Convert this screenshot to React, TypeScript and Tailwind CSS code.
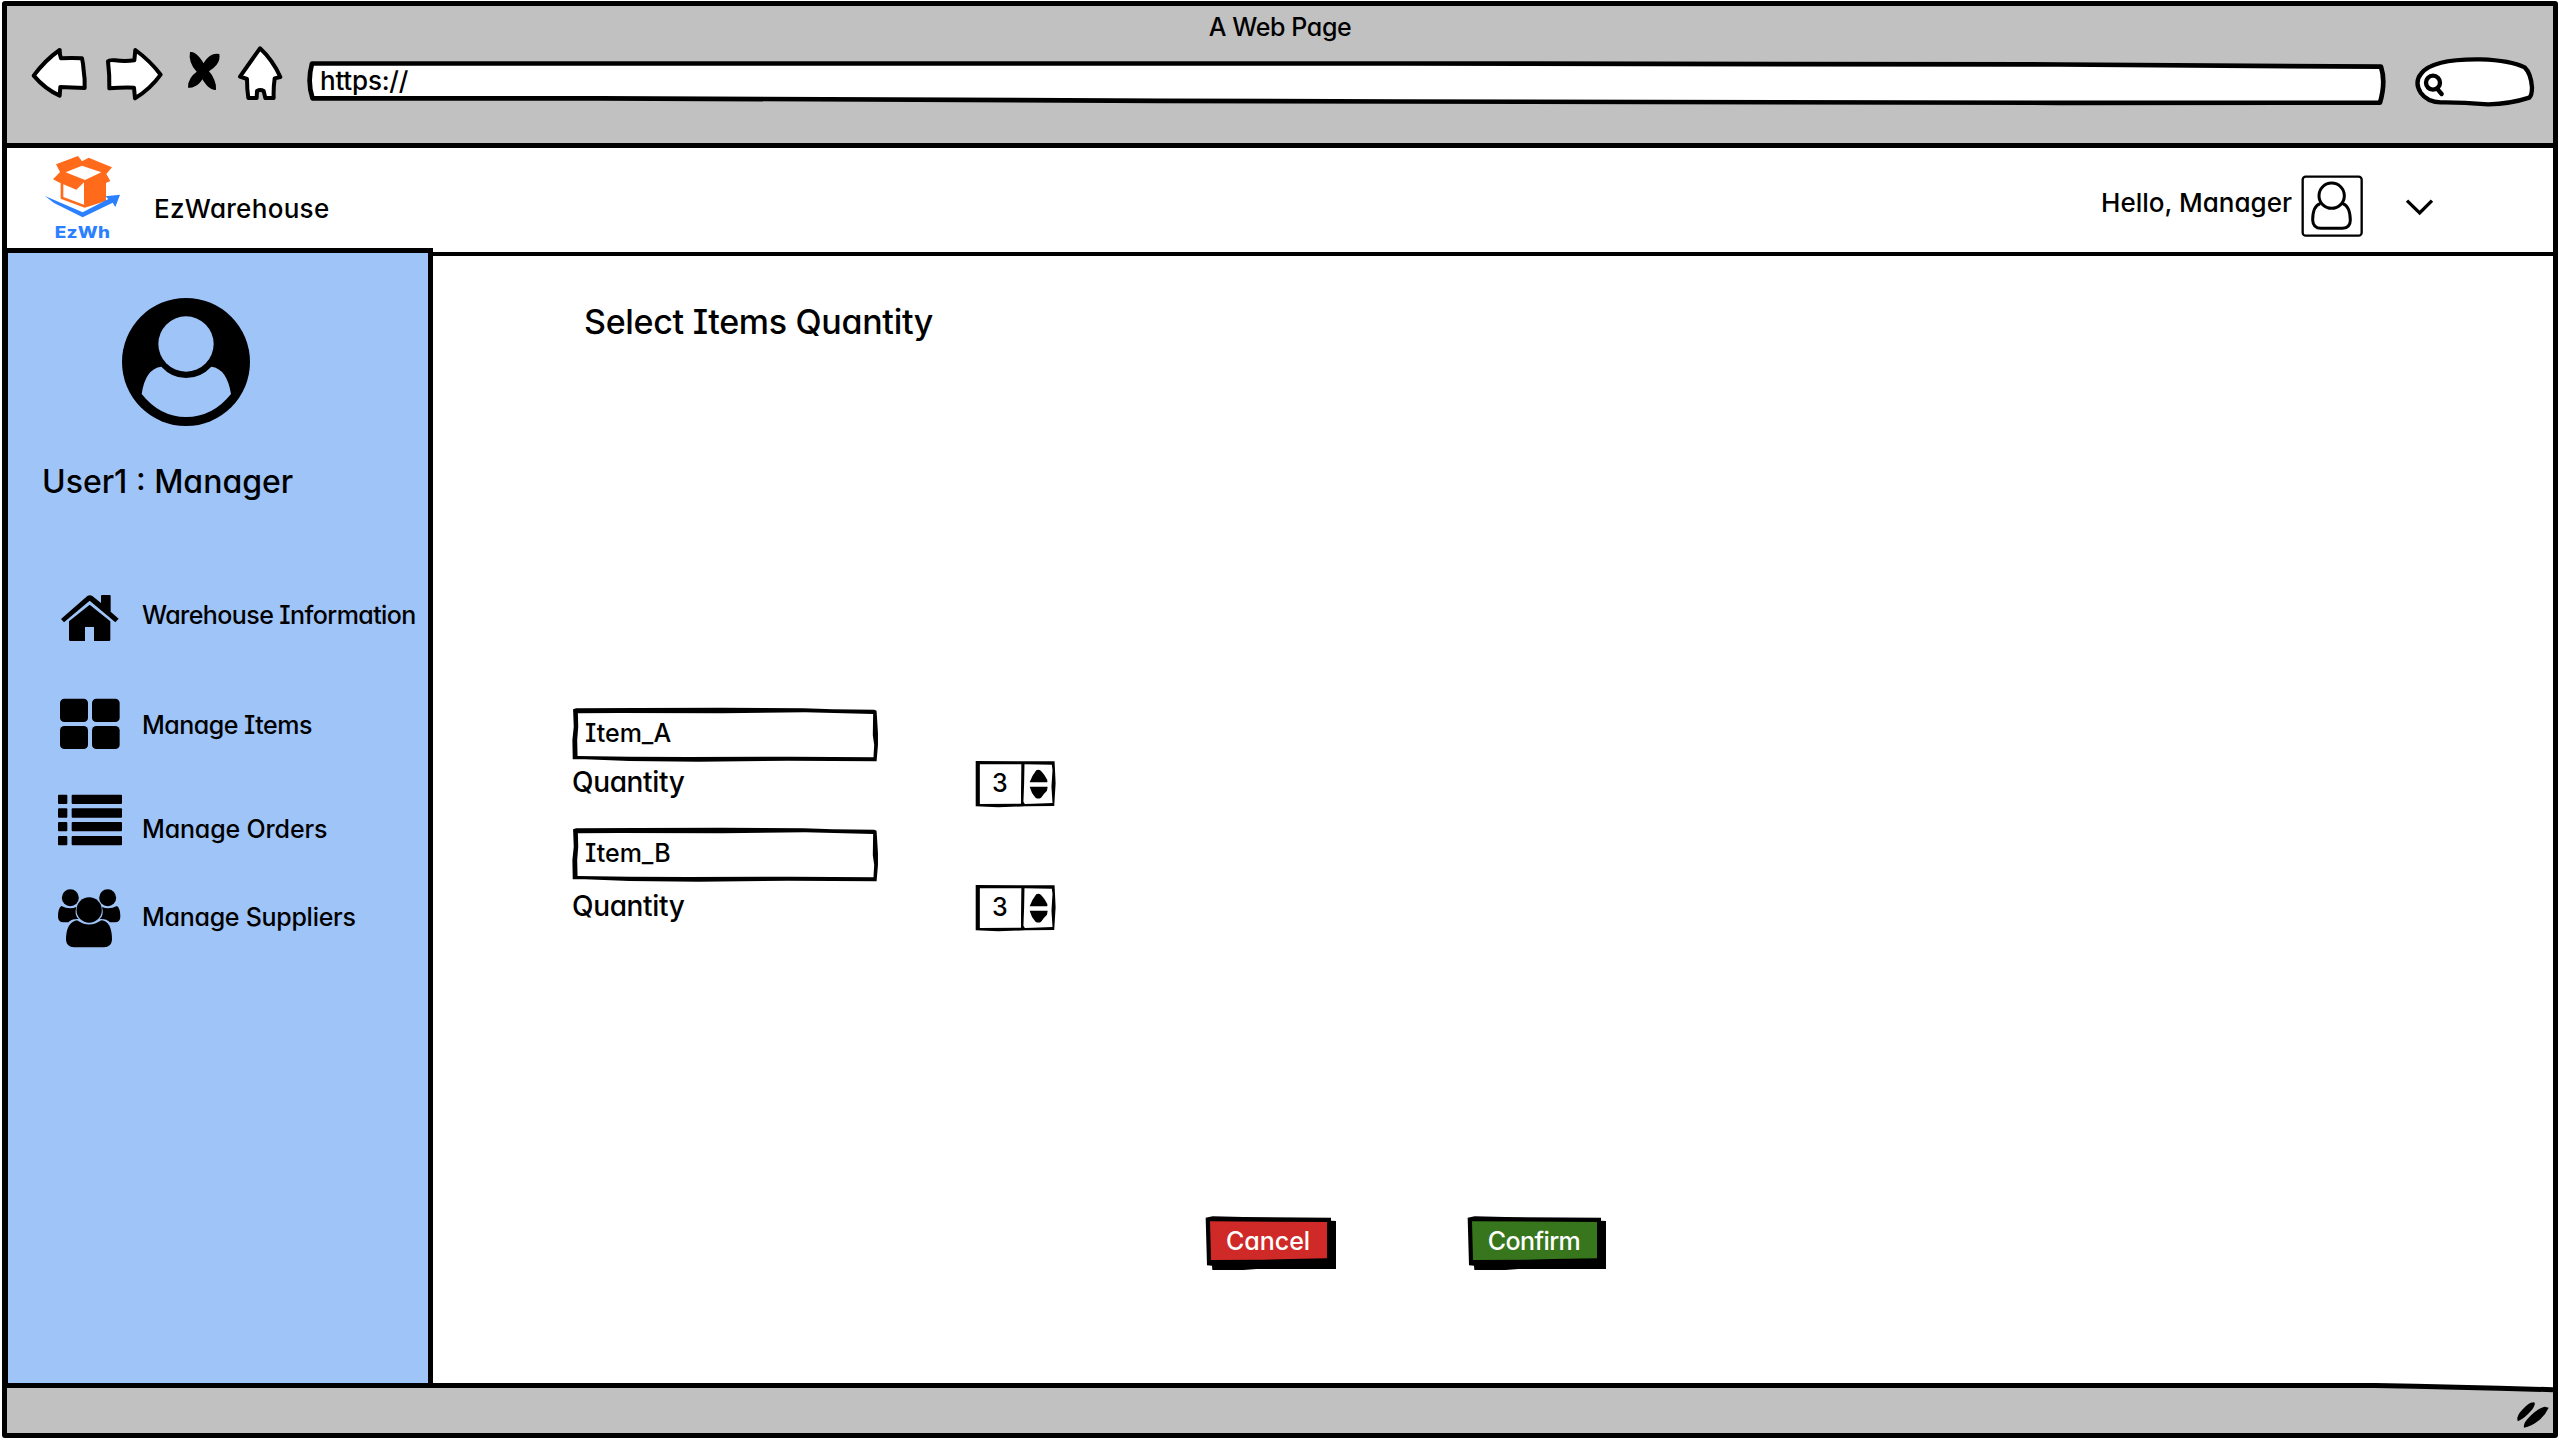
import type { ReactNode } from "react";

/* ---------- browser chrome icons ---------- */

function BackIcon() {
  return (
    <svg className="h-[54px] w-[60px]" viewBox="90 138 180 162" fill="#fff" stroke="#000" strokeWidth="12" strokeLinejoin="round">
      <path d="M101 227 Q136 180 179 150 Q179 164 183 175 Q215 173 246 175 Q250 192 251 212 Q255 236 254 264 Q215 262 181 261 L179 287 Q136 268 101 227 Z" />
    </svg>
  );
}

function ForwardIcon() {
  return (
    <svg className="h-14 w-[60px]" viewBox="312 138 180 168" fill="#fff" stroke="#000" strokeWidth="12" strokeLinejoin="round">
      <path d="M324 184 Q328 179 345 181 Q375 185 403 181 L406 150 Q450 182 482 224 Q450 268 405 295 L402 263 Q365 262 328 265 Q329 225 324 184 Z" />
    </svg>
  );
}

function StopIcon() {
  return (
    <svg className="h-[42px] w-9" viewBox="558 150 108 126">
      <path d="M570 156 Q583 154 597 170 Q607 182 611 190 Q620 172 636 164 Q648 159 658 162 Q661 180 650 194 Q640 206 627 214 Q637 224 643 240 Q650 256 648 270 Q632 270 620 256 Q612 246 607 238 Q600 252 585 259 Q574 265 564 263 Q563 248 572 234 Q580 222 590 215 Q578 204 572 186 Q567 170 570 156 Z" />
    </svg>
  );
}

function HomeIcon() {
  return (
    <svg className="h-14 w-12" viewBox="708 135 144 168" fill="#fff" stroke="#000" strokeWidth="12" strokeLinejoin="round">
      <path d="M780 145 Q755 180 720 230 L741 237 Q741 268 745 294 L770 294 L771 273 Q781 267 791 273 L796 294 L821 294 Q820 262 824 235 L841 231 Q818 180 780 145 Z" />
    </svg>
  );
}

function SearchBox() {
  return (
    <svg className="h-[52px] w-[122px]" viewBox="1062 48 366 156" fill="#fff" stroke="#000" strokeWidth="13" strokeLinejoin="round" strokeLinecap="round">
      <path d="M1142 187 Q1102 186 1082 158 Q1062 126 1084 100 Q1118 56 1262 58 Q1352 61 1394 82 Q1413 100 1416 142 Q1416 166 1408 173 Q1350 192 1285 193 Q1200 186 1142 187 Z" />
      <circle cx="1119" cy="128" r="21" strokeWidth="13" />
      <path d="M1133 148 L1145 162" strokeWidth="13" />
    </svg>
  );
}

/* ---------- application icons ---------- */

function LogoMark() {
  return (
    <svg className="h-[63px] w-[77px]" viewBox="42 30 231 189">
      <path fill="#ff6b1a" d="M78 58 L144 33 L156 49 L176 38 L246 67 L229 87 L241 108 L228 114 V168 L164 188 L92 161 V115 L69 103 L90 81 Z" />
      <path fill="#fff" d="M107 82 L156 62 L214 82 L165 105 Z" />
      <path fill="#fff" d="M100 118 L139 134 L162 112 V179 L100 156 Z" />
      <path fill="#2b80ff" d="M45 153 L158 202 L235 162 L226 154 L270 149 L256 186 L248 173 L158 217 L72 174 Z" />
    </svg>
  );
}

function ProfileBox() {
  return (
    <svg className="h-16 w-16" viewBox="720 402 192 192" fill="none" stroke="#000" strokeWidth="9">
      <rect x="728" y="410" width="177" height="177" rx="9" strokeWidth="7" />
      <circle cx="815" cy="467" r="38" />
      <path d="M781 491 Q758 498 758 540 Q759 565 783 565 H848 Q871 563 871 540 Q870 498 848 491" />
    </svg>
  );
}

function ChevronIcon() {
  return (
    <svg className="h-[18px] w-[29px]" viewBox="1035 474 87 54" fill="none" stroke="#000" strokeWidth="10">
      <path d="M1041 482 L1079 519 L1116 482" />
    </svg>
  );
}

function Avatar() {
  return (
    <svg className="size-32" viewBox="366 174 384 384">
      <circle cx="558" cy="366" r="192" />
      <g fill="#9fc4f8">
        <circle cx="558" cy="312" r="83" />
        <path d="M484 380 Q515 414 558 414 Q602 414 634 380 Q681 386 693 462 Q638 531 558 531 Q480 531 425 462 Q436 386 484 380 Z" />
      </g>
    </svg>
  );
}

function HouseIcon() {
  return (
    <svg className="h-12 w-[60px]" viewBox="180 102 180 144">
      <path d="M183 177 L262 108 Q269 103 277 108 L303 129 V108 Q303 105 306 105 H329 Q332 105 332 108 V155 L356 176 L346 187 L269 122 L192 187 Z" />
      <path d="M269 134 L331 184 V239 Q331 243 327 243 H282 V201 H255 V243 H211 Q207 243 207 239 V184 Z" />
    </svg>
  );
}

function TilesIcon() {
  return (
    <svg className="h-[53px] w-[62px]" viewBox="177 411 186 159">
      <rect x="180" y="416" width="84" height="70" rx="13" />
      <rect x="276" y="416" width="83" height="70" rx="13" />
      <rect x="180" y="498" width="84" height="69" rx="13" />
      <rect x="276" y="498" width="83" height="69" rx="13" />
    </svg>
  );
}

function ListIcon() {
  return (
    <svg className="h-[53px] w-[66px]" viewBox="171 699 198 159">
      {[704, 745, 786, 828].map((y) => (
        <g key={y}>
          <rect x="174" y={y} width="28" height="28" rx="3" />
          <rect x="215" y={y} width="151" height="28" rx="3" />
        </g>
      ))}
    </svg>
  );
}

const SHOULDER = "M184 1038 Q208 1050 229 1041 Q222 1066 236 1077 Q214 1076 205 1087 H190 Q174 1086 174 1070 Q174 1045 184 1038 Z";

function PeopleIcon() {
  return (
    <svg className="h-[61px] w-[65px]" viewBox="171 984 195 183">
      <circle cx="211" cy="1013" r="25.5" />
      <circle cx="323" cy="1013" r="25.5" />
      <circle cx="267.500" cy="1050" r="38" />
      <path d={SHOULDER} />
      <path d={SHOULDER} transform="translate(535) scale(-1 1)" />
      <path d="M231 1081 Q267 1106 304 1081 Q336 1084 336 1140 Q334 1162 312 1162 H222 Q200 1162 198 1140 Q198 1087 231 1081 Z" />
    </svg>
  );
}

function ResizeGrip() {
  return (
    <svg className="h-7 w-[34px]" viewBox="648 153 102 84">
      <path d="M702 157 Q709 160 697 178 Q676 204 654 214 Q648 204 659 188 Q680 163 692 158 Z" />
      <path d="M734 170 L746 173 Q738 192 717 211 Q694 230 672 233 Q669 222 683 206 Q712 176 734 170 Z" />
    </svg>
  );
}

/* ---------- hand-drawn controls ---------- */

function AddressBar() {
  return (
    <div className="relative h-[50px] w-[2086px]">
      <svg className="absolute inset-0 h-full w-full" viewBox="304 58 2086 50" fill="#fff" stroke="#000" strokeWidth="4.700" strokeLinejoin="round">
        <path d="M312 63.500 H1400 L2060 64.500 L2381 66.700 Q2386 82 2380 102.700 L2060 102.800 L1400 101.500 L1160 100.800 L600 98.300 H312.500 Q307 82 312 63.500 Z" />
      </svg>
      <span className="absolute top-[7px] left-4 text-[26px] leading-8 tracking-[-0.2px]">https://</span>
    </div>
  );
}

function TextField({ value }: { value: string }) {
  return (
    <div className="relative -ml-px h-14 w-[308px]">
      <svg className="absolute inset-0 h-full w-full" viewBox="60 48 894 168" preserveAspectRatio="none">
        <path
          fillRule="evenodd"
          d="M66 58 L75 55 L250 54 L500 53 L735 55 L820 58 L940 59 L947 62 L951 130 L951 165 L947 214 L690 212 L430 215 L230 213 L100 208 L65 208 L64 150 L68 110 Z M80 70 L200 69 L500 70 L740 67 L937 72 L936 135 L940 165 L938 202 L700 200 L400 201 L230 200 L79 198 L78 150 L81 110 Z"
        />
      </svg>
      <span className="absolute top-[11px] left-[14px] text-[25px] leading-8">{value}</span>
    </div>
  );
}

function Stepper({ value }: { value: number }) {
  return (
    <div className="relative h-12 w-[82px]">
      <svg className="absolute inset-0 h-full w-full" viewBox="1233 210 237 144" preserveAspectRatio="none">
        <path
          fillRule="evenodd"
          d="M1235 213 L1463 214 L1466 280 L1462 348 L1380 349 L1300 352 L1235 349 Z M1247 223 L1367 223 L1366 300 L1366 341 L1247 342 Z M1376 223 L1455 224 L1457 240 L1454 290 L1457 339 L1400 341 L1377 342 L1373 335 L1375 280 Z"
        />
        <path d="M1391 277 Q1396 260 1410 241 Q1417 237 1424 243 Q1436 256 1442 270 V277 Z" />
        <path d="M1391 290 H1443 L1441 302 Q1430 313 1424 323 Q1416 328 1408 323 Q1395 308 1391 290 Z" />
      </svg>
      <span className="absolute top-[7px] left-[17px] text-[25px] leading-8">{value}</span>
    </div>
  );
}

function ActionButton({ width, color, children }: { width: 132 | 140; color: string; children: ReactNode }) {
  const d = width === 132 ? 0 : 24;
  const r = (x: number) => x + d;
  return (
    <button className={width === 132 ? "relative h-[55px] w-[132px]" : "relative h-[55px] w-[140px]"}>
      <svg className="absolute inset-0 h-full w-full" viewBox={`75 78 ${width * 3} 165`}>
        <path d={`M77 83 L98 79 L190 81 L${r(453)} 83 V92 L${r(468)} 93 V237 H230 L190 240 H97 L96 227 L81 226 Z`} />
        <path fill={color} d={`M90 94 L${r(441)} 96 V205 L330 207 L250 209 L93 210 Z`} />
      </svg>
      <span className="absolute inset-x-0 top-[9px] pr-[6px] text-[25px] leading-8 text-white">{children}</span>
    </button>
  );
}

/* ---------- page sections ---------- */

function Toolbar() {
  return (
    <div className="h-[142px] border-b-[5px] border-black bg-[#c1c1c1]">
      <div className="h-9 pt-[5px] text-center text-[25px] leading-8 tracking-[-0.4px]">A Web Page</div>
      <div className="flex items-start pl-[23px]">
        <div className="mt-1">
          <BackIcon />
        </div>
        <div className="mt-1 ml-[14px]">
          <ForwardIcon />
        </div>
        <div className="mt-2 ml-[22px]">
          <StopIcon />
        </div>
        <div className="mt-[3px] ml-[14px]">
          <HomeIcon />
        </div>
        <div className="mt-4 ml-[20px]">
          <AddressBar />
        </div>
        <div className="mt-[14px] ml-[24px]">
          <SearchBox />
        </div>
      </div>
    </div>
  );
}

function Header() {
  return (
    <header className="flex h-[108px] items-start border-b-4 border-black bg-white">
      <div className="mt-[7px] ml-[37px] flex w-[77px] flex-col items-center">
        <LogoMark />
        <span className="mt-[4px] h-5 scale-x-[1.18] text-[16px] leading-5 font-extrabold tracking-[0.2px] text-[#2b80ff] [font-feature-settings:normal]">EzWh</span>
      </div>
      <div className="mt-[45px] ml-[33px] text-[26px] leading-8 tracking-[0.3px]">EzWarehouse</div>
      <div className="mr-[119px] ml-auto flex items-start">
        <div className="mt-[39px] text-[26px] leading-8">Hello, Manager</div>
        <div className="mt-[26px] ml-[8px]">
          <ProfileBox />
        </div>
        <div className="mt-[50px] ml-[41px]">
          <ChevronIcon />
        </div>
      </div>
    </header>
  );
}

function Sidebar() {
  return (
    <aside className="relative -mt-2 flex w-[426px] flex-col border-t-[5px] border-r-[5px] border-l border-black bg-[#9fc4f8]">
      <div className="mt-[45px] ml-[114px]">
        <Avatar />
      </div>
      <div className="mt-[36px] ml-[34px] h-10 text-[32px] leading-10">User1 : Manager</div>
      <nav className="mt-[92px] flex flex-col">
        <div className="flex h-[103px] items-start pl-[52px]">
          <HouseIcon />
          <span className="mt-[5px] ml-[22px] text-[25px] leading-8 tracking-[-0.58px] whitespace-nowrap">Warehouse Information</span>
        </div>
        <div className="flex h-24 items-start pl-[51px]">
          <TilesIcon />
          <span className="mt-3 ml-[21px] text-[25px] leading-8 tracking-[-0.5px] whitespace-nowrap">Manage Items</span>
        </div>
        <div className="flex h-[95px] items-start pl-[49px]">
          <ListIcon />
          <span className="mt-5 ml-[19px] text-[25px] leading-8 tracking-[-0.15px] whitespace-nowrap">Manage Orders</span>
        </div>
        <div className="flex items-start pl-[49px]">
          <PeopleIcon />
          <span className="mt-[13px] ml-[20px] text-[25px] leading-8 tracking-[-0.28px] whitespace-nowrap">Manage Suppliers</span>
        </div>
      </nav>
    </aside>
  );
}

function ItemQuantity({ name, quantity, gap }: { name: string; quantity: number; gap: "near" | "far" }) {
  return (
    <div>
      <TextField value={name} />
      <div className={gap === "near" ? "-mt-[2px] flex items-start" : "mt-[2px] flex items-start"}>
        <div className="mt-1 w-[403px] text-[28px] leading-9 tracking-[-0.35px]">Quantity</div>
        <Stepper value={quantity} />
      </div>
    </div>
  );
}

function Main() {
  return (
    <main className="flex flex-1 flex-col pl-[139px]">
      <h1 className="mt-[46px] ml-[12px] h-10 text-[34px] leading-10 tracking-[-0.3px]">Select Items Quantity</h1>
      <div className="mt-[364px] flex flex-col gap-[18px]">
        <ItemQuantity name="Item_A" quantity={3} gap="near" />
        <ItemQuantity name="Item_B" quantity={3} gap="far" />
      </div>
      <div className="mt-[284px] ml-[633px] flex gap-[130px]">
        <ActionButton width={132} color="#cf2a27">
          Cancel
        </ActionButton>
        <ActionButton width={140} color="#38761d">
          <span className="tracking-[-0.6px]">Confirm</span>
        </ActionButton>
      </div>
    </main>
  );
}

function StatusBar() {
  return (
    <footer className="relative flex h-[50px] justify-end border-t-[5px] border-black bg-[#c1c1c1]">
      <svg className="absolute -top-[8px] right-0 h-[18px] w-[253px]" viewBox="2300 1380 253 18">
        <path fill="#fff" d="M2375 1380 H2553 V1388 L2375 1384 Z" />
        <path fill="none" stroke="#000" strokeWidth="5" d="M2300 1385.500 H2375 Q2460 1387 2553 1389.700" />
      </svg>
      <div className="mt-[13px] mr-[3px]">
        <ResizeGrip />
      </div>
    </footer>
  );
}

export default function App() {
  return (
    <div className="h-[1440px] w-[2560px] overflow-hidden bg-white pt-px pl-[2px] font-['Inter',sans-serif] font-medium text-black [font-feature-settings:'cv11','cv08']">
      <div className="flex h-[1437px] w-[2556px] flex-col rounded-[3px] border-[5px] border-black bg-white">
        <Toolbar />
        <Header />
        <div className="flex min-h-0 flex-1">
          <Sidebar />
          <Main />
        </div>
        <StatusBar />
      </div>
    </div>
  );
}
